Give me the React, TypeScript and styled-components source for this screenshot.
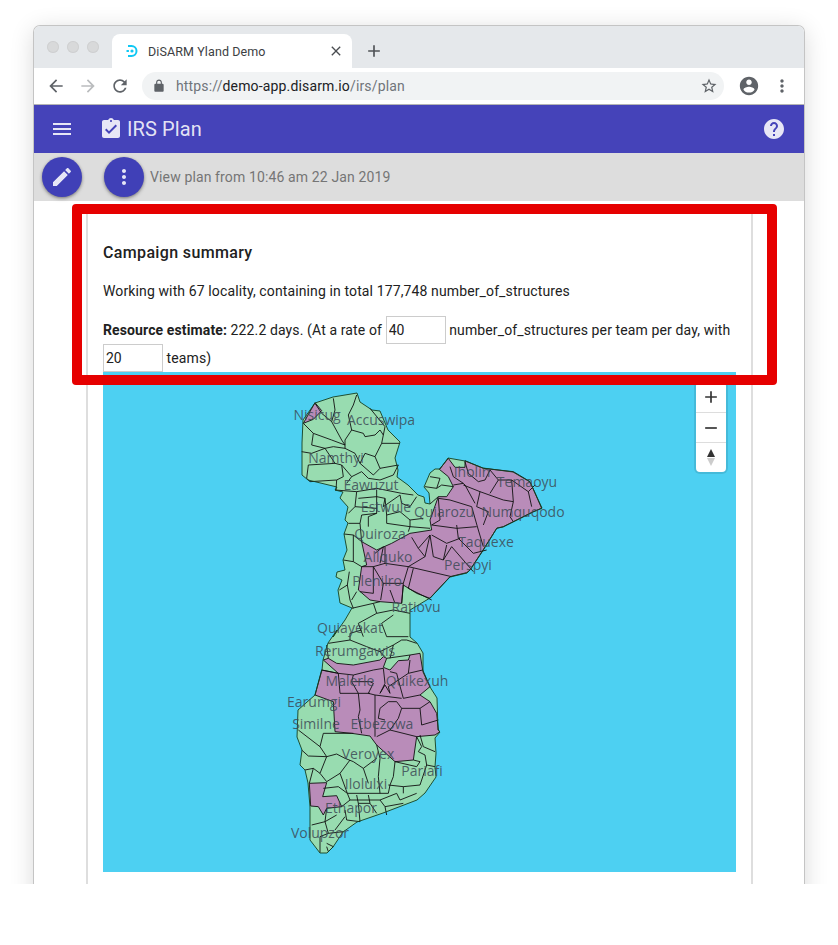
import React from "react";
import styled, { createGlobalStyle } from "styled-components";

const GlobalStyle = createGlobalStyle`
  html, body { margin: 0; padding: 0; background: #fff; }
  body { font-family: Roboto, "Liberation Sans", sans-serif; }
`;

const Page = styled.div`
  position: relative;
  width: 838px;
  height: 884px;
  padding: 26px 0 0 34px;
  box-sizing: border-box;
  overflow: hidden;
`;

const Window = styled.div`
  width: 770px;
  height: 900px;
  background: #fff;
  border-radius: 6px 6px 0 0;
  box-shadow: 0 0 0 1px #c4c4c4, 0 4px 24px rgba(0, 0, 0, 0.16);
  overflow: hidden;
`;

const TabStrip = styled.div`
  height: 42px;
  background: #e5e8eb;
  display: flex;
  align-items: flex-end;
  padding-left: 13px;
`;

const Lights = styled.div`
  display: flex;
  gap: 8px;
  align-self: flex-start;
  margin-top: 15px;
  width: 65px;
`;

const Light = styled.span`
  width: 12px;
  height: 12px;
  border-radius: 50%;
  background: #d8d9da;
  box-shadow: inset 0 0 0 1px #cfd0d1;
`;

const Tab = styled.div`
  width: 240px;
  height: 34px;
  background: #fff;
  border-radius: 8px 8px 0 0;
  display: flex;
  align-items: center;
  padding: 0 8px 0 14px;
  box-sizing: border-box;
  font-size: 12.5px;
  letter-spacing: 0.1px;
  color: #3c4043;
`;

const TabTitle = styled.span`
  flex: 1;
  margin-left: 8px;
`;

const NewTab = styled.div`
  margin: 0 0 5px 12px;
  height: 24px;
  display: flex;
  align-items: center;
`;

const AddressRow = styled.div`
  box-sizing: border-box;
  border-bottom: 1px solid #b4b4b4;
  background: #fff;
  display: flex;
  align-items: center;
  padding: 0 12px;
  height: 37px;
`;

const NavIcons = styled.div`
  display: flex;
  gap: 12px;
  margin-right: 12px;
`;

const UrlPill = styled.div`
  width: 586px;
  height: 28px;
  border-radius: 14px;
  background: #f1f3f4;
  display: flex;
  align-items: center;
  padding: 0 9px 0 10px;
  box-sizing: border-box;
  font-size: 14px;
  letter-spacing: 0.15px;
  color: #70757a;
`;

const UrlText = styled.span`
  flex: 1;
  margin-left: 10px;
`;

const UrlHost = styled.span`
  color: #202124;
`;

const RightIcons = styled.div`
  display: flex;
  align-items: center;
  gap: 12px;
  margin-left: 14px;
`;

const AppBar = styled.header`
  height: 48px;
  background: #4543b9;
  display: flex;
  align-items: center;
  padding: 0 18px 0 16px;
  color: rgba(255, 255, 255, 0.87);
`;

const Title = styled.h1`
  flex: 1;
  margin: 0 0 0 4px;
  font-size: 20px;
  font-weight: 400;
  letter-spacing: 0.1px;
`;

const TitleIconSlot = styled.span`
  display: flex;
  margin-left: 25px;
`;

const Toolbar = styled.div`
  height: 48px;
  background: #dddddd;
  display: flex;
  align-items: center;
  padding-left: 8px;
  font-size: 14px;
  letter-spacing: 0.13px;
  color: #757575;
`;

const Fab = styled.button<{ $gap: number }>`
  width: 40px;
  height: 40px;
  padding: 0;
  margin-right: ${(p) => p.$gap}px;
  border: 0;
  border-radius: 50%;
  background: #4040b7;
  display: flex;
  align-items: center;
  justify-content: center;
  box-shadow: 0 1px 3px rgba(0, 0, 0, 0.35), 0 2px 4px rgba(0, 0, 0, 0.15);
`;

const Card = styled.section`
  margin: 12px 51px 0 52px;
  height: 700px;
  border: 1px solid #dedede;
  border-width: 1px 2px 1px 2px;
  padding: 0 14px 0 15px;
  font-size: 14px;
  color: #212121;
`;

const CardTitle = styled.h2`
  margin: 29px 0 0;
  font-size: 16px;
  line-height: 19px;
  font-weight: 500;
  letter-spacing: 0.35px;
`;

const Summary = styled.p`
  margin: 20px 0 0;
  line-height: 18px;
  letter-spacing: 0.12px;
`;

const Estimate = styled.p`
  margin: 16px 0 0;
  line-height: 28px;
  letter-spacing: 0.12px;
`;

const NumberInput = styled.input`
  width: 60px;
  height: 28px;
  box-sizing: border-box;
  border: 1px solid #cccccc;
  padding: 0 2px;
  font: inherit;
  color: #212121;
  vertical-align: top;
`;

const MapBox = styled.div`
  position: relative;
  width: 633px;
  height: 500px;
  background: #4dd0f2;
`;

const MapSvg = styled.svg`
  display: block;
`;

const MapLabel = styled.text`
  font-family: "Open Sans", "Noto Sans", sans-serif;
  font-size: 14px;
  fill: #3c4a55;
  fill-opacity: 0.85;
  text-anchor: middle;
`;

const ZoomGroup = styled.div`
  position: absolute;
  top: 10px;
  right: 10px;
  width: 30px;
  background: #fff;
  border-radius: 4px;
  box-shadow: 0 0 0 2px rgba(0, 0, 0, 0.1);
`;

const ZoomButton = styled.div`
  height: 30px;
  display: flex;
  align-items: center;
  justify-content: center;
  & + & {
    border-top: 1px solid #ddd;
    height: 29px;
  }
`;

const Highlight = styled.div`
  position: absolute;
  left: 72px;
  top: 204px;
  width: 705px;
  height: 181px;
  box-sizing: border-box;
  border: 10px solid #e60000;
  border-radius: 4px;
  pointer-events: none;
`;

const StarSlot = styled.span`
  display: flex;
  margin-right: -3px;
`;

const paths = {
  menu: "M3 18h18v-2H3v2zm0-5h18v-2H3v2zm0-7v2h18V6H3z",
  task: "M19 3h-4.18C14.4 1.84 13.3 1 12 1c-1.3 0-2.4.84-2.82 2H5c-1.1 0-2 .9-2 2v14c0 1.1.9 2 2 2h14c1.1 0 2-.9 2-2V5c0-1.1-.9-2-2-2zm-7 0c.55 0 1 .45 1 1s-.45 1-1 1-1-.45-1-1 .45-1 1-1zm-2 14l-4-4 1.41-1.41L10 14.17l6.59-6.59L18 9l-8 8z",
  help: "M12 2C6.48 2 2 6.48 2 12s4.48 10 10 10 10-4.48 10-10S17.52 2 12 2zm1 17h-2v-2h2v2zm2.07-7.75l-.9.92C13.45 12.9 13 13.5 13 15h-2v-.5c0-1.1.45-2.1 1.17-2.83l1.24-1.26c.37-.36.59-.86.59-1.41 0-1.1-.9-2-2-2s-2 .9-2 2H8c0-2.21 1.79-4 4-4s4 1.79 4 4c0 .88-.36 1.68-.93 2.25z",
  edit: "M3 17.25V21h3.75L17.81 9.94l-3.75-3.75L3 17.25zM20.71 7.04c.39-.39.39-1.02 0-1.41l-2.34-2.34c-.39-.39-1.02-.39-1.41 0l-1.83 1.83 3.75 3.75 1.83-1.83z",
  more: "M12 8c1.1 0 2-.9 2-2s-.9-2-2-2-2 .9-2 2 .9 2 2 2zm0 2c-1.1 0-2 .9-2 2s.9 2 2 2 2-.9 2-2-.9-2-2-2zm0 6c-1.1 0-2 .9-2 2s.9 2 2 2 2-.9 2-2-.9-2-2-2z",
  back: "M20 11H7.83l5.59-5.59L12 4l-8 8 8 8 1.41-1.41L7.83 13H20v-2z",
  forward: "M12 4l-1.41 1.41L16.17 11H4v2h12.17l-5.58 5.59L12 20l8-8z",
  reload: "M17.65 6.35C16.2 4.9 14.21 4 12 4c-4.42 0-7.99 3.58-7.99 8s3.57 8 7.99 8c3.73 0 6.84-2.55 7.73-6h-2.08c-.82 2.33-3.04 4-5.65 4-3.31 0-6-2.69-6-6s2.69-6 6-6c1.66 0 3.14.69 4.22 1.78L13 11h7V4l-2.35 2.35z",
  lock: "M18 8h-1V6c0-2.76-2.24-5-5-5S7 3.24 7 6v2H6c-1.1 0-2 .9-2 2v10c0 1.1.9 2 2 2h12c1.1 0 2-.9 2-2V10c0-1.1-.9-2-2-2zM9 6c0-1.66 1.34-3 3-3s3 1.34 3 3v2H9V6z",
  star: "M22 9.24l-7.19-.62L12 2 9.19 8.63 2 9.24l5.46 4.73L5.82 21 12 17.27 18.18 21l-1.63-7.03L22 9.24zM12 15.4l-3.76 2.27 1-4.28-3.32-2.88 4.38-.38L12 6.1l1.71 4.04 4.38.38-3.32 2.88 1 4.28L12 15.4z",
  account: "M12 2C6.48 2 2 6.48 2 12s4.48 10 10 10 10-4.48 10-10S17.52 2 12 2zm0 3c1.66 0 3 1.34 3 3s-1.34 3-3 3-3-1.34-3-3 1.34-3 3-3zm0 14.2c-2.5 0-4.71-1.28-6-3.22.03-1.99 4-3.08 6-3.08 1.99 0 5.97 1.09 6 3.08-1.29 1.94-3.5 3.22-6 3.22z",
  close: "M19 6.41L17.59 5 12 10.59 6.41 5 5 6.41 10.59 12 5 17.59 6.41 19 12 13.41 17.59 19 19 17.59 13.41 12z",
  plus: "M19 13h-6v6h-2v-6H5v-2h6V5h2v6h6v2z",
  minus: "M19 13H5v-2h14v2z",
};

const Icon = ({ name, size = 24, color }: { name: keyof typeof paths; size?: number; color: string }) => (
  <svg width={size} height={size} viewBox="0 0 24 24" fill={color} style={{ display: "block", flex: "none" }}>
    <path d={paths[name]} />
  </svg>
);

const Favicon = () => (
  <svg width="14" height="14" viewBox="0 0 14 14" fill="none" style={{ flex: "none" }}>
    <path d="M2 2h3.5a5 5 0 0 1 0 10H2" stroke="#10c8f4" strokeWidth="2" />
    <circle cx="6" cy="7" r="1.6" fill="#10c8f4" />
    <rect x="0.5" y="6" width="2.4" height="2" fill="#10c8f4" />
  </svg>
);

// page coordinates, shifted into the map by the viewBox
const coast =
  "315,403 333,397 357,393 360,402 372,410 380,411 388,430 400,442 395,458 398,470 397,477 408,485 418,495 424,497 425,503 430,504 429,493 424,487 430,473 435,469 440,469 448,458 465,461 483,468 513,472 530,482 542,508 533,512 503,527 497,528 483,550 470,570 467,573 450,577 430,598 410,610 410,637 417,643 423,653 423,672 430,687 437,698 438,730 440,732 435,738 436,753 435,767 436,777 425,793 417,800 383,813 357,822 343,832 333,847 327,853 320,853 310,840 310,807 308,783 305,770 300,765 302,750 297,737 298,710 315,695 322,670 323,660 328,643 337,630 333,637 345,620 352,608 340,603 338,590 342,580 336,577 337,572 345,570 343,560 347,550 344,534 348,523 345,520 348,507 340,498 343,492 335,490 337,487 308,480 302,475 302,443 303,420";

// the blocks and lines below are in crop coordinates (3x), one set per group
const northPurple = [
  "508,268 535,235 555,262 585,262 585,242 640,265 730,275 780,305 815,385 790,395 700,440 680,445 640,510 600,570 590,578 540,590 480,655 440,640 400,615 395,670 330,665 300,660 265,630 275,560 290,555 275,485 320,510 365,490 420,460 485,450 480,420 505,350 530,350 550,320 535,290",
  "100,130 135,68 155,92 130,118",
];

const topLines = [
  "70,115 100,145 155,165 195,180",
  "105,55 125,85 155,110 185,165 195,180",
  "160,40 165,75 155,110",
  "230,30 220,60 205,90 215,135 195,165 195,190 225,205 240,235 255,205 285,215 300,250 355,240",
  "215,135 250,145 255,155 285,150 300,135 310,150 315,125",
  "315,125 270,70",
  "310,150 305,175 360,175",
  "305,175 285,215",
  "100,145 95,180 135,190 160,185 195,190",
  "65,200 95,205 135,190",
  "135,190 165,235 185,240 190,275 170,285 168,315",
  "85,240 80,280 90,290 170,285",
  "85,240 165,235",
  "185,240 215,275 245,260 265,280 300,285 340,270 355,240",
  "215,275 200,295",
  "240,235 280,270 300,250",
];

const midLines = [
  "195,330 260,335 320,325 395,340 430,345",
  "260,335 255,380 235,400",
  "265,355 320,350 345,355 340,380 390,345",
  "320,330 320,400 295,410 295,440",
  "345,355 350,405 390,395 420,420 460,415",
  "255,380 320,385",
  "390,345 395,370 420,380 440,350",
  "235,430 270,430 275,405 320,400",
  "270,430 275,485",
  "350,405 350,430 420,440 415,455",
  "420,420 420,440 480,445",
  "222,462 250,465 250,545 275,560",
  "250,465 275,485",
  "220,540 250,545",
  "238,575 232,615 208,630",
  "232,615 240,660 250,685",
  "260,635 245,660",
  "465,320 500,325 515,315 550,320",
  "480,290 510,295 500,325",
  "480,372 505,350",
  "245,685 310,670 330,665",
  "310,670 320,700 265,730 280,770",
  "320,700 370,690 420,700",
  "335,730 350,770 415,770",
  "335,730 370,705",
];

const eastLines = [
  "375,35 385,70 415,95 435,90 450,60",
  "330,50 340,80 370,100 375,105 405,160",
  "340,105 370,100",
  "370,105 420,125 410,170 445,185 430,225",
  "420,125 490,150 520,155 510,200 520,215",
  "450,60 475,90 515,90 520,155",
  "475,90 450,130",
  "515,90 565,125 575,170",
  "565,125 585,105",
  "295,145 330,150 395,170 415,240 430,290",
  "295,145 300,210 275,225",
  "275,225 350,235 410,230",
  "350,225 355,265 400,310 440,300",
  "275,255 320,280 360,265",
  "215,262 235,295 270,255",
  "235,295 255,320 270,255 280,320 310,330 320,285",
  "255,320 205,350 190,400",
  "310,330 335,290 400,365",
  "335,380 270,365 205,350",
  "220,355 205,415 275,450",
  "60,425 100,430 100,350 65,350",
  "100,350 135,340 135,290",
  "100,350 130,400 122,450",
  "130,400 190,400 185,460",
  "150,420 165,460",
  "105,310 130,290 120,340",
  "135,340 205,350",
];

const southPurple = [
  "160,90 175,85 200,100 250,105 330,90 340,80 350,85 340,112 360,120 385,92 415,90 420,75 450,70 458,120 480,170 450,195 480,215 500,250 505,300 510,305 495,315 440,320 430,390 375,395 320,345 300,318 245,310 195,305 190,215 135,195 155,120 205,130",
  "118,460 170,458 158,500 200,497 215,530 170,535 160,555 145,530 122,528",
];

const southLines = [
  "175,40 240,30 290,50 330,65 345,80",
  "240,30 240,10 275,0",
  "330,65 370,45 395,30 410,30 440,40",
  "370,45 360,85",
  "350,85 420,75",
  "175,85 170,45",
  "155,120 205,130 210,190 265,190 300,190",
  "205,130 250,135 245,155 265,190 270,240 265,260 275,310",
  "250,135 310,120 340,115",
  "250,155 300,155 310,160 295,190 315,195 315,320",
  "315,195 395,205",
  "340,115 345,160 330,190 345,165 360,190 355,170 385,150 400,205",
  "360,125 380,130 385,150 415,130 420,90",
  "415,130 458,120",
  "400,205 450,195",
  "395,235 450,235 455,285 505,270",
  "450,235 480,215",
  "320,320 360,300 385,265 395,235 380,215 355,215 330,235 325,265 345,270",
  "360,300 440,320",
  "85,300 150,350 170,380 115,378 95,360",
  "150,350 160,310 250,310",
  "170,380 200,372 225,385 250,395 280,415 320,385",
  "320,345 330,385 325,440",
  "375,395 370,440 360,465 355,490",
  "375,395 440,410 450,395 430,390",
  "105,420 130,415 150,430 170,380",
  "150,430 170,455 210,430 240,390",
  "130,415 118,460",
  "210,430 232,490",
  "280,415 295,460",
  "440,320 455,350 445,365 465,375 470,405",
  "450,315 460,350 495,365",
  "495,410 470,405 450,465 400,470 400,490",
  "325,440 330,490",
  "355,465 400,470",
  "160,475 205,470 232,490 300,490 355,490",
  "232,490 240,510 215,530",
  "260,495 265,520 300,520 295,495",
  "240,510 330,510 380,490 390,510 440,490",
  "330,510 345,530 400,520",
  "300,520 320,550",
  "345,530 350,555",
  "265,520 270,575",
  "225,540 230,570 270,575",
  "170,535 165,575 125,585",
  "200,555 165,575 175,610 220,605",
  "225,560 195,600",
  "175,610 150,620 150,668",
  "170,640 190,650 175,665 170,650",
];

const labels: [string, number, number][] = [
  ["Nisicug", 317, 420],
  ["Accuswipa", 381, 425],
  ["Namthyi", 336, 463],
  ["Eawuzut", 371, 490],
  ["Estwule", 386, 512],
  ["Quiarozu", 444, 517],
  ["Numquqodo", 523, 517],
  ["Iholin", 472, 477],
  ["Temaoyu", 527, 487],
  ["Quiroza", 380, 539],
  ["Taquexe", 486, 547],
  ["Allquko", 388, 562],
  ["Perspyi", 468, 570],
  ["Plenilro", 377, 586],
  ["Ratiovu", 416, 612],
  ["Quiayekat", 350, 633],
  ["Rerumgawis", 355, 656],
  ["Malerle", 350, 686],
  ["Quikexuh", 417, 686],
  ["Earumgi", 314, 707],
  ["Similne", 316, 729],
  ["Etbezowa", 382, 729],
  ["Veroyex", 368, 759],
  ["Pariafi", 422, 776],
  ["Ilolulxi", 366, 789],
  ["Ethapor", 351, 813],
  ["Volupzor", 320, 838],
];

const Regions = ({ x, y, fills = [], lines }: { x: number; y: number; fills?: string[]; lines: string[] }) => (
  <g transform={`translate(${x} ${y}) scale(${1 / 3})`}>
    {fills.map((p, i) => (
      <polygon key={i} points={p} fill="#b98cb9" stroke="#111" strokeWidth="0.9" vectorEffect="non-scaling-stroke" />
    ))}
    {lines.map((p, i) => (
      <polyline key={i} points={p} fill="none" stroke="#111" strokeWidth="0.9" vectorEffect="non-scaling-stroke" />
    ))}
  </g>
);

const IslandMap = () => (
  <MapSvg width="633" height="500" viewBox="103 372 633 500">
    <polygon points={coast} fill="#98dcb0" />
    <Regions x={270} y={380} fills={northPurple} lines={midLines} />
    <Regions x={280} y={385} lines={topLines} />
    <Regions x={340} y={450} lines={eastLines} />
    <Regions x={270} y={630} fills={southPurple} lines={southLines} />
    <polygon points={coast} fill="none" stroke="#14401f" strokeWidth="0.9" />
    {labels.map(([name, x, y]) => (
      <MapLabel key={name} x={x} y={y}>
        {name}
      </MapLabel>
    ))}
  </MapSvg>
);

const App = () => {
  return (
    <Page>
      <GlobalStyle />
      <Window>
        <TabStrip>
          <Lights>
            <Light />
            <Light />
            <Light />
          </Lights>
          <Tab>
            <Favicon />
            <TabTitle>DiSARM Yland Demo</TabTitle>
            <Icon name="close" size={16} color="#4a4d51" />
          </Tab>
          <NewTab>
            <Icon name="plus" size={20} color="#505357" />
          </NewTab>
        </TabStrip>
        <AddressRow>
          <NavIcons>
            <Icon name="back" size={20} color="#5f6368" />
            <Icon name="forward" size={20} color="#babcbe" />
            <Icon name="reload" size={20} color="#5f6368" />
          </NavIcons>
          <UrlPill>
            <Icon name="lock" size={14} color="#5f6368" />
            <UrlText>
              https://<UrlHost>demo-app.disarm.io</UrlHost>/irs/plan
            </UrlText>
            <StarSlot>
              <Icon name="star" size={18} color="#5f6368" />
            </StarSlot>
          </UrlPill>
          <RightIcons>
            <Icon name="account" size={22} color="#5f6368" />
            <Icon name="more" size={20} color="#5f6368" />
          </RightIcons>
        </AddressRow>
        <AppBar>
          <Icon name="menu" size={24} color="rgba(255,255,255,0.87)" />
          <TitleIconSlot>
            <Icon name="task" size={24} color="rgba(255,255,255,0.87)" />
          </TitleIconSlot>
          <Title>IRS Plan</Title>
          <Icon name="help" size={24} color="rgba(255,255,255,0.87)" />
        </AppBar>
        <Toolbar>
          <Fab $gap={22}>
            <Icon name="edit" color="rgba(255,255,255,0.87)" />
          </Fab>
          <Fab $gap={6}>
            <Icon name="more" color="rgba(255,255,255,0.87)" />
          </Fab>
          View plan from 10:46 am 22 Jan 2019
        </Toolbar>
        <Card>
          <CardTitle>Campaign summary</CardTitle>
          <Summary>Working with 67 locality, containing in total 177,748 number_of_structures</Summary>
          <Estimate>
            <strong>Resource estimate:</strong> 222.2 days. (At a rate of <NumberInput defaultValue="40" />{" "}
            number_of_structures per team per day, with <NumberInput defaultValue="20" /> teams)
          </Estimate>
          <MapBox>
            <IslandMap />
            <ZoomGroup>
              <ZoomButton>
                <Icon name="plus" size={20} color="#333" />
              </ZoomButton>
              <ZoomButton>
                <Icon name="minus" size={20} color="#333" />
              </ZoomButton>
              <ZoomButton>
                <svg width="8" height="17" viewBox="0 0 8 17">
                  <polygon points="4,0 8,8 0,8" fill="#333" />
                  <polygon points="4,17 8,9 0,9" fill="#ccc" />
                </svg>
              </ZoomButton>
            </ZoomGroup>
          </MapBox>
        </Card>
      </Window>
      <Highlight />
    </Page>
  );
};

export default App;
